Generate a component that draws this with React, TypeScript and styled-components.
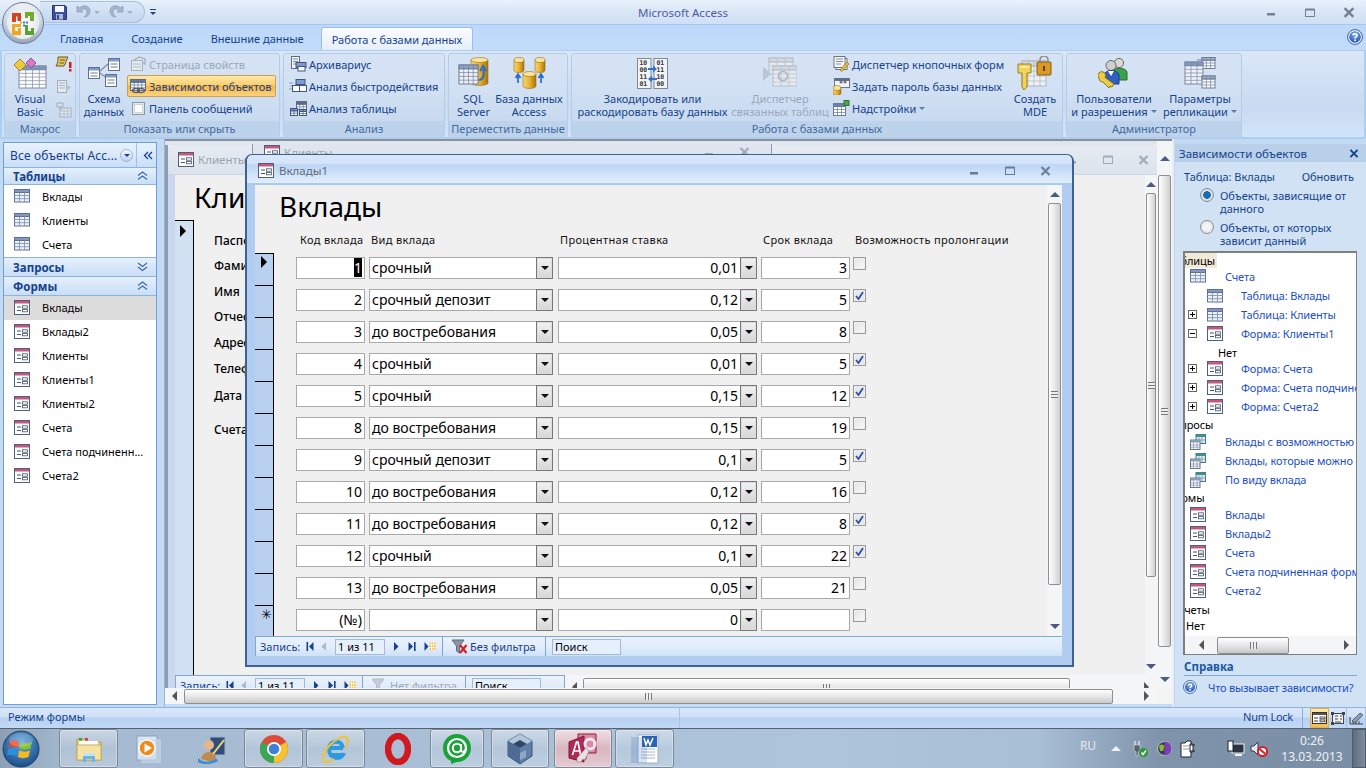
import React from "react";
import styled, { createGlobalStyle } from "styled-components";

const FONT = `"Noto Sans","DejaVu Sans",sans-serif`;

const Global = createGlobalStyle`
  html,body{margin:0;padding:0;overflow:hidden;background:#bfd6f3;}
  body{font-family:${FONT};font-size:11px;color:#15428b;}
  *{box-sizing:border-box;}
  svg{display:block;flex-shrink:0;}
`;

/* ---------- icon helpers ---------- */
type GP = { x: number; y: number; w: number; h: number; c: number; r: number; head?: string; line?: string; fill?: string };
const G = ({ x, y, w, h, c, r, head = "#8ea6cc", line = "#7d8ba8", fill = "#fff" }: GP) => {
  const cw = w / c, rh = h / r;
  return (
    <g>
      <rect x={x} y={y} width={w} height={h} fill={fill} stroke={line} strokeWidth="1" />
      <rect x={x} y={y} width={w} height={rh} fill={head} stroke={line} strokeWidth="1" />
      {Array.from({ length: c - 1 }, (_, i) => <path key={i} d={`M${x + cw * (i + 1)} ${y}V${y + h}`} stroke={line} strokeWidth=".7" />)}
      {Array.from({ length: r - 1 }, (_, i) => <path key={i} d={`M${x} ${y + rh * (i + 1)}H${x + w}`} stroke={line} strokeWidth=".7" />)}
    </g>
  );
};
const Cyl = ({ x, y, w, h }: { x: number; y: number; w: number; h: number }) => (
  <g>
    <defs>
      <linearGradient id="cy" x1="0" x2="1" y1="0" y2="0">
        <stop offset="0" stopColor="#f7d774" /><stop offset=".5" stopColor="#e8b22f" /><stop offset="1" stopColor="#a9740c" />
      </linearGradient>
    </defs>
    <path d={`M${x} ${y + 2}V${y + h - 2}a${w / 2} 2.5 0 0 0 ${w} 0V${y + 2}z`} fill="url(#cy)" stroke="#99701a" strokeWidth=".6" />
    <ellipse cx={x + w / 2} cy={y + 2} rx={w / 2} ry="2.5" fill="#f9e59a" stroke="#99701a" strokeWidth=".6" />
  </g>
);
const TableIcon = () => (
  <svg width="16" height="14" viewBox="0 0 16 14"><rect x=".5" y=".5" width="15" height="12.5" fill="#eef2f9" stroke="#5f6f90" /><rect x=".5" y=".5" width="15" height="3" fill="#8397bf" stroke="#5f6f90" /><path d="M5.5 3.5V13M10.5 3.5V13M.5 6.5H15.5M.5 9.7H15.5" stroke="#8b9cc0" /></svg>
);
const FormIcon = () => (
  <svg width="16" height="15" viewBox="0 0 16 15"><rect x=".5" y=".5" width="15" height="14" fill="#fff" stroke="#4f5f80" /><rect x="1" y="1" width="14" height="2.5" fill="#c8557a" /><path d="M3 7H7M3 10.5H7" stroke="#44546f" /><rect x="8.5" y="5.8" width="5" height="2.4" fill="#fff" stroke="#44546f" strokeWidth=".8" /><rect x="8.5" y="9.4" width="5" height="2.4" fill="#fff" stroke="#44546f" strokeWidth=".8" /></svg>
);
const QueryIcon = () => (
  <svg width="16" height="16" viewBox="0 0 16 16"><rect x="6" y=".5" width="9.5" height="9" fill="#dfeaea" stroke="#3c7d80" /><rect x="6" y=".5" width="9.5" height="2.5" fill="#3f8f92" /><rect x=".5" y="6" width="9.5" height="9.5" fill="#fff" stroke="#66748f" /><rect x=".5" y="6" width="9.5" height="2.5" fill="#8a9dbd" /><path d="M3.5 8.5V15.5M7 8.5V15.5M.5 11H10M.5 13.2H10M9 3.5V6M12 3V9.5M10 6H15.5" stroke="#7d8ca8" strokeWidth=".7" /></svg>
);
const Orb = () => (
  <svg width="44" height="44" viewBox="0 0 44 44">
    <defs>
      <radialGradient id="orbg" cx=".5" cy=".25" r=".85"><stop offset="0" stopColor="#fdfdfd" /><stop offset=".55" stopColor="#cfd9e6" /><stop offset="1" stopColor="#7f8ea3" /></radialGradient>
      <radialGradient id="orbi" cx=".5" cy=".5" r=".6"><stop offset="0" stopColor="#fff" /><stop offset="1" stopColor="#e1e7ee" /></radialGradient>
    </defs>
    <circle cx="22" cy="22" r="20.5" fill="url(#orbg)" stroke="#6f7f95" />
    <circle cx="22" cy="22" r="16" fill="url(#orbi)" />
    <path d="M11 12h9v8h-3.5v-4.5H15V21h-4z" fill="#d9431c" />
    <path d="M11 23h9v3h-6v4h3v-3h3v7h-9z" fill="#f2a51e" />
    <path d="M24 11h9v9h-4v-5h-2v2h-3z" fill="#74ad2a" />
    <path d="M24 24h3v6h3v-3h3v7h-9z" fill="#58a22e" />
    <rect x="22" y="20.5" width="2" height="2" fill="#3f78c4" /><rect x="19" y="20.5" width="2" height="2" fill="#c7a92a" /><rect x="25" y="20.5" width="2" height="2" fill="#3f78c4" /><rect x="22" y="23.5" width="2" height="2" fill="#3f78c4" />
  </svg>
);
const Save = () => (
  <svg width="15" height="15" viewBox="0 0 15 15"><path d="M.5.5H13L14.5 2V14.5H.5z" fill="#3b4f9c" stroke="#2b3570" /><rect x="3" y="1" width="9" height="6" fill="#f6f8fc" /><rect x="4" y="9" width="7" height="5.5" fill="#aab8d8" /><rect x="5" y="10" width="2" height="4" fill="#34457f" /></svg>
);
const Undo = ({ flip }: { flip?: boolean }) => (
  <svg width="15" height="14" viewBox="0 0 15 14"><g transform={flip ? "translate(15 0) scale(-1 1)" : ""}><path d="M1 1V7H7L5 5C8 3 11 4 11 7C11 9 10 11 8 12C12 12 14 9 14 6C14 1 8 -1 3.5 2.8z" fill="#a7b6ca" stroke="#8b9bb1" strokeWidth=".7" /></g></svg>
);
const Dn = styled.span<{ $c?: string }>`
  display:inline-block;width:0;height:0;flex-shrink:0;
  border-left:3px solid transparent;border-right:3px solid transparent;border-top:3px solid ${p => p.$c || "#a0b0c6"};
`;
const WMin = ({ c = "#707a88" }: { c?: string }) => <svg width="11" height="10" viewBox="0 0 11 10"><rect x="1" y="6" width="8" height="2.5" fill={c} /></svg>;
const WMax = ({ c = "#707a88", w = 9 }: { c?: string; w?: number }) => <svg width="10" height="9" viewBox="0 0 10 9"><rect x=".5" y="1.5" width={w} height="7" fill="none" stroke={c} /><rect x=".5" y=".5" width={w} height="2" fill={c} /></svg>;
const WClose = ({ c = "#707a88", s = 11 }: { c?: string; s?: number }) => <svg width={s} height={s - 1} viewBox="0 0 11 10"><path d="M1.5 1L9.5 9M9.5 1L1.5 9" stroke={c} strokeWidth="2.2" /></svg>;
const Help = ({ s = 16 }: { s?: number }) => (
  <svg width={s} height={s} viewBox="0 0 16 16"><defs><radialGradient id="hp" cx=".5" cy=".3" r=".8"><stop offset="0" stopColor="#7fb2f0" /><stop offset="1" stopColor="#1446a8" /></radialGradient></defs><circle cx="8" cy="8" r="7.4" fill="#f3f7fc" stroke="#2f5da8" /><circle cx="8" cy="8" r="5.8" fill="url(#hp)" /><path d="M6 6.3C6 4.4 10 4.3 10 6.4C10 7.9 8 7.8 8 9.5" fill="none" stroke="#fff" strokeWidth="1.6" /><rect x="7.2" y="10.5" width="1.7" height="1.7" fill="#fff" /></svg>
);
/* ribbon icons */
const VbIcon = () => (
  <svg width="34" height="32" viewBox="0 0 34 32"><G x={6} y={9} w={27} h={22} c={4} r={6} head="#7f97bf" /><path d="M1 8L7 2L13 8L7 14z" fill="#f0c93c" stroke="#a5842a" /><path d="M13 6L18 1L23 6L18 11z" fill="#d87ac8" stroke="#9a4c8f" /></svg>
);
const MacroIcon = () => (
  <svg width="18" height="16" viewBox="0 0 18 16"><path d="M3 1H13C11 4 11 7 9 10H1C3 7 3 4 3 1z" fill="#e4c660" stroke="#6b5a25" /><path d="M5 4H10M4.5 7H9" stroke="#6b5a25" /><rect x="14" y="6" width="2.5" height="6" fill="#d21f1f" /><rect x="14" y="13" width="2.5" height="2.5" fill="#d21f1f" /></svg>
);
const GrayDoc = () => (
  <svg width="16" height="16" viewBox="0 0 16 16"><rect x="1.5" y="1.5" width="9" height="12" fill="#e4eaf2" stroke="#a1adbc" /><path d="M3 4H9M3 6.5H9M3 9H9" stroke="#a8b4c4" /><path d="M10 5L15 8.5L10 12z" fill="#b4bfce" /></svg>
);
const GrayDoc2 = () => (
  <svg width="16" height="16" viewBox="0 0 16 16"><rect x="4" y="6" width="11" height="9" fill="#e4eaf2" stroke="#a1adbc" /><path d="M4 9H15M4 12H15M8 6V15M11.5 6V15" stroke="#b4bfce" /><path d="M1 1H7V5H1zM3 5L6 8" fill="#d6dde8" stroke="#a1adbc" /></svg>
);
const SchemaIcon = () => (
  <svg width="32" height="30" viewBox="0 0 32 30"><path d="M12 13L20 6M12 15L20 21" stroke="#7f8ea8" strokeWidth="1.2" /><g fill="#fff" stroke="#5d6f94"><rect x=".5" y="9.5" width="11" height="11" /><rect x="20.5" y=".5" width="11" height="12" /><rect x="17.5" y="16.5" width="11" height="12" /></g><g fill="#7f9ac7"><rect x="1" y="10" width="10" height="2.5" /><rect x="21" y="1" width="10" height="2.5" /><rect x="18" y="17" width="10" height="2.5" /></g><path d="M2.5 15H9.5M2.5 18H9.5M22.5 6H29.5M22.5 9H29.5M19.5 22H26.5M19.5 25H26.5" stroke="#6b7a96" /></svg>
);
const PropIcon = () => (
  <svg width="16" height="16" viewBox="0 0 16 16"><rect x="1.5" y="4.5" width="11" height="10" fill="#e4e9f0" stroke="#a6afbc" /><path d="M3 8H11M3 11H11" stroke="#b4bcc8" /><path d="M4 4L9 1L15 3V8L13 6.5" fill="none" stroke="#a6afbc" strokeWidth="1.3" /></svg>
);
const DepIcon = () => (
  <svg width="17" height="16" viewBox="0 0 17 16"><G x={.5} y={1.5} w={15} h={11} c={4} r={4} head="#5f7eab" line="#5c6c8c" /><ellipse cx="6" cy="12.5" rx="3.5" ry="2.2" fill="none" stroke="#4d5a70" strokeWidth="1.2" /><ellipse cx="11" cy="12.5" rx="3.5" ry="2.2" fill="none" stroke="#4d5a70" strokeWidth="1.2" /></svg>
);
const CheckBoxIcon = () => (
  <svg width="13" height="13" viewBox="0 0 13 13"><rect x=".5" y=".5" width="12" height="12" fill="#e6eaf0" stroke="#8d98a6" /><rect x="2.5" y="2.5" width="8" height="8" fill="#fff" stroke="#cdd3db" /></svg>
);
const ArchIcon = () => (
  <svg width="17" height="16" viewBox="0 0 17 16"><rect x="1.5" y=".5" width="8" height="12" fill="#f3f6fb" stroke="#5f6f8a" /><path d="M3 3H8M3 5.5H8M3 8H7" stroke="#7c8aa3" /><rect x="6" y="6.5" width="10" height="5" fill="#7e9ccb" stroke="#3f5788" /><rect x="8" y="10.5" width="7" height="4.5" fill="#fff" stroke="#3f5788" /></svg>
);
const PerfIcon = () => (
  <svg width="18" height="16" viewBox="0 0 18 16"><path d="M0 5H4M1 8H4M0 11H4" stroke="#7fa3d1" /><rect x="7" y="1.5" width="9" height="5" fill="#7e9ccb" stroke="#3f5788" /><rect x="3.5" y="7.5" width="7" height="6" fill="#fff" stroke="#3f5788" /><rect x="10.5" y="7.5" width="7" height="6" fill="#fff" stroke="#3f5788" /><path d="M12 6.5V7.5M7 6.5V7.5" stroke="#3f5788" /></svg>
);
const TabAnIcon = () => (
  <svg width="17" height="16" viewBox="0 0 17 16"><G x={6.5} y={1.5} w={10} h={8} c={3} r={3} head="#5e6d86" line="#5e6d86" /><G x={.5} y={8.5} w={7} h={7} c={2} r={3} head="#7e9ccb" line="#3f5788" /><G x={9.5} y={9.5} w={7} h={6} c={2} r={3} head="#7e9ccb" line="#3f5788" /></svg>
);
const SqlIcon = () => (
  <svg width="32" height="32" viewBox="0 0 32 32"><Cyl x={13} y={1} w={17} h={27} /><G x={1} y={8} w={19} h={19} c={4} r={5} head="#8ea3c6" line="#6f7f9c" fill="#eef2f8" /><path d="M21 23C27 22 26 15 25 12M22 14L25 9L28 14" fill="none" stroke="#2c6cc8" strokeWidth="2" /></svg>
);
const DbIcon = () => (
  <svg width="33" height="32" viewBox="0 0 33 32"><Cyl x={1} y={1} w={10} h={14} /><Cyl x={22} y={1} w={10} h={14} /><Cyl x={10} y={15} w={13} h={16} /><path d="M5 18V26M2.5 21L5 17L7.5 21M28 26V18M25.5 21L28 17L30.5 21" fill="none" stroke="#2c6cc8" strokeWidth="1.7" /></svg>
);
const EncIcon = () => (
  <svg width="31" height="31" viewBox="0 0 31 31" fontFamily="DejaVu Sans Mono, monospace" fontSize="6.4" fontWeight="700" fill="#333">
    <rect x=".5" y=".5" width="13.5" height="30" fill="#f2f4f7" stroke="#7f8895" /><rect x="17" y=".5" width="13.5" height="30" fill="#f2f4f7" stroke="#7f8895" />
    <text x="2.5" y="7">10</text><text x="2.5" y="14">00</text><text x="2.5" y="21">11</text><text x="2.5" y="28">01</text>
    <text x="19.5" y="7">01</text><text x="19.5" y="14">11</text><text x="19.5" y="21">10</text><text x="19.5" y="28">00</text>
    <path d="M11 10H16V7.5L20 11L16 14.5V12H11zM20 20H15V17.5L11 21L15 24.5V22H20z" fill="#2d6fc9" />
  </svg>
);
const LinkIcon = () => (
  <svg width="34" height="32" viewBox="0 0 34 32"><G x={6} y={1} w={24} h={16} c={3} r={4} head="#d3d9e2" line="#b8bfca" fill="#e6eaf0" /><G x={10} y={9} w={24} h={20} c={3} r={5} head="#d3d9e2" line="#b8bfca" fill="#e6eaf0" /><path d="M0 10L8 17L0 24z" fill="#b9c6d6" /><circle cx="20" cy="19" r="4.5" fill="none" stroke="#aab4c2" strokeWidth="1.6" /></svg>
);
const SwitchIcon = () => (
  <svg width="17" height="16" viewBox="0 0 17 16"><rect x="3" y="2.5" width="11" height="11" fill="#fff" stroke="#6a7484" /><rect x="1" y=".5" width="11" height="11" fill="#f6f7f9" stroke="#6a7484" /><path d="M3 3H10M3 5.5H10M3 8H8" stroke="#808a9a" /><path d="M7 14L14 6L16 8L9 15.5z" fill="#e7b93b" stroke="#84681f" strokeWidth=".6" /></svg>
);
const PassIcon = () => (
  <svg width="17" height="17" viewBox="0 0 17 17"><rect x="1.5" y=".5" width="15" height="9" fill="#f2f4f7" stroke="#6d7788" /><rect x="1.5" y=".5" width="15" height="2.4" fill="#5d6e8c" /><text x="6" y="9" fontSize="8" fill="#333" fontFamily="DejaVu Sans">**</text><Cyl x={0} y={8} w={8} h={9} /></svg>
);
const AddIcon = () => (
  <svg width="17" height="16" viewBox="0 0 17 16"><G x={.5} y={3.5} w={12} h={12} c={3} r={4} head="#6b83ae" line="#6b7b98" /><rect x="11" y=".5" width="5" height="5" fill="#4aa64c" stroke="#2d7a30" /></svg>
);
const MdeIcon = () => (
  <svg width="36" height="34" viewBox="0 0 36 34"><G x={5} y={5} w={24} h={25} c={4} r={5} head="#d6dce6" line="#aeb6c4" fill="#edf0f5" /><rect x="20" y="6" width="14" height="13" rx="1" fill="#d99b22" stroke="#845b0f" /><path d="M23 6V4A4 4 0 0 1 31 4V6" fill="none" stroke="#8c8f94" strokeWidth="1.6" /><rect x="26" y="10" width="2" height="5" fill="#5f420c" /><path d="M1 8H14V17H10V31L7 34L5 31V17H1z" fill="#f1d35a" stroke="#9a7e1f" /><rect x="3" y="10" width="9" height="2" fill="#fbeaa4" /></svg>
);
const UsersIcon = () => (
  <svg width="32" height="32" viewBox="0 0 32 32"><circle cx="21" cy="6" r="4.6" fill="#d8d8d8" stroke="#6a6a6a" /><path d="M14 15C14 10 28 10 29 15V23H15z" fill="#3e9f4a" stroke="#2a6b33" /><circle cx="13" cy="8.5" r="5" fill="#cfcfcf" stroke="#6a6a6a" /><path d="M6 18C7 12 20 12 21 18V27H7z" fill="#2f60c2" stroke="#213f82" /><path d="M10 14L13 19L16 14" fill="#fff" /><path d="M1 21A3.8 3.8 0 1 1 7 20.5L16 27L14 30L12 29L11 31L9 29L5 25C3 25 1 24 1 21z" fill="#eccb48" stroke="#8d7419" /></svg>
);
const ReplIcon = () => (
  <svg width="32" height="32" viewBox="0 0 32 32"><path d="M18 3H13M18 24H13" stroke="#6f7f9c" /><G x={18} y={.5} w={13} h={11} c={3} r={4} head="#9fb0ca" line="#6f7f9c" /><G x={1} y={5} w={18} h={22} c={3} r={6} head="#7f96bf" line="#7a88a4" fill="#eef2f8" /><G x={18} y={19} w={13} h={12} c={3} r={4} head="#9fb0ca" line="#6f7f9c" /></svg>
);
const ArrowR = ({ c = "#15428b" }: { c?: string }) => <svg width="6" height="9" viewBox="0 0 6 9"><path d="M1 0L5.5 4.5L1 9z" fill={c} /></svg>;
const ArrowL = ({ c = "#15428b" }: { c?: string }) => <svg width="6" height="9" viewBox="0 0 6 9"><path d="M5 0L.5 4.5L5 9z" fill={c} /></svg>;
const First = () => <svg width="8" height="9" viewBox="0 0 8 9"><rect x=".5" width="1.6" height="9" fill="#15428b" /><path d="M7.5 0L3 4.5L7.5 9z" fill="#15428b" /></svg>;
const Last = () => <svg width="8" height="9" viewBox="0 0 8 9"><rect x="6" width="1.6" height="9" fill="#15428b" /><path d="M.5 0L5 4.5L.5 9z" fill="#15428b" /></svg>;
const NewRec = () => <svg width="12" height="9" viewBox="0 0 12 9"><path d="M.5 0L4.5 4.5L.5 9z" fill="#15428b" /><rect x="5.5" y=".5" width="6" height="7.5" fill="#f4c54a" /><path d="M5.5 2.5H11.5M5.5 5.5H11.5M7.5.5V8M9.5.5V8" stroke="#fff" strokeWidth=".7" /></svg>;
const Funnel = ({ on }: { on?: boolean }) => (
  <svg width="18" height="15" viewBox="0 0 18 15"><path d="M1 1H13L8.5 7V14L5.5 12V7z" fill={on ? "#8a95a8" : "#c4ccd8"} stroke={on ? "#5f6a7c" : "#b3bcc9"} />{on && <path d="M9 6L15.5 14M15.5 6L9 14" stroke="#d9231f" strokeWidth="2.2" />}</svg>
);

/* taskbar */
const TFolder = () => <svg width="30" height="30" viewBox="0 0 30 30"><path d="M3 5H11L13 8H27V26H3z" fill="#e7cd7a" stroke="#b69c4f" /><rect x="5" y="7" width="19" height="5" fill="#fff" /><rect x="5" y="4" width="3" height="2.5" fill="#2fa637" /><rect x="11" y="4" width="3" height="2.5" fill="#d93f3a" /><path d="M3 11H27V26H3z" fill="#f5e3a4" stroke="#c8ae62" /><path d="M9 22H21V28H18V25H12V28H9z" fill="#6ab4e8" /><rect x="10" y="19" width="10" height="3" fill="#bfe2f7" /></svg>;
const TWmp = () => <svg width="28" height="30" viewBox="0 0 28 30"><rect x="2" y="2" width="20" height="24" fill="#dce6f2" stroke="#8aa2bd" /><rect x="6" y="5" width="20" height="24" fill="#c9d8ea" opacity=".6" /><circle cx="12" cy="14" r="8" fill="#f08a1d" stroke="#fff" strokeWidth="1.5" /><path d="M9.5 9.5L17 14L9.5 18.5z" fill="#fff" /></svg>;
const TPen = () => <svg width="32" height="30" viewBox="0 0 32 30"><rect x="14" y="3" width="15" height="18" fill="#2f4f7a" stroke="#9fb2c8" /><circle cx="13" cy="11" r="5" fill="#e4b68a" /><path d="M5 25C6 17 18 15 20 23L16 28z" fill="#c28a4a" /><path d="M2 24C8 30 16 28 20 24L22 27C15 31 7 31 2 28z" fill="#3a8bd8" /><path d="M17 20L28 6" stroke="#f0d57a" strokeWidth="2" /></svg>;
const TChrome = () => <svg width="30" height="30" viewBox="0 0 30 30"><circle cx="15" cy="15" r="14" fill="#dd4b39" /><path d="M15 15L27.1 8A14 14 0 0 1 15 29z" fill="#f4c430" /><path d="M15 15L15 29A14 14 0 0 1 2.9 8z" fill="#3aa757" /><circle cx="15" cy="15" r="7" fill="#fff" /><circle cx="15" cy="15" r="5.3" fill="#3f81d9" /></svg>;
const TIe = () => <svg width="30" height="30" viewBox="0 0 30 30"><path d="M8 21H22M8 14H22M22 14C21 5 8 6 8 15C8 26 21 26 23 19" fill="none" stroke="#2b9ae0" strokeWidth="4" /><path d="M25 3C22 1 14 6 8 12C2 19 0 27 4 28C7 29 11 26 13 25" fill="none" stroke="#f2c230" strokeWidth="2" /><path d="M25 3C29 5 26 11 24 14" fill="none" stroke="#f2c230" strokeWidth="2" /></svg>;
const TOpera = () => <svg width="26" height="32" viewBox="0 0 26 32"><ellipse cx="13" cy="16" rx="10" ry="13" fill="none" stroke="#d0181f" strokeWidth="6.5" /></svg>;
const TMail = () => <svg width="30" height="32" viewBox="0 0 30 32"><path d="M15 1C23 1 29 7 29 15C29 23 23 29 15 29L9 31V28C4 26 1 21 1 15C1 7 7 1 15 1z" fill="#1ba33a" /><circle cx="15" cy="15" r="9" fill="none" stroke="#fff" strokeWidth="2.2" /><circle cx="15" cy="15" r="4.2" fill="none" stroke="#fff" strokeWidth="2" /><path d="M19 11V17C19 20 23 19 24 16" fill="none" stroke="#fff" strokeWidth="2" /></svg>;
const TVbox = () => <svg width="28" height="32" viewBox="0 0 28 32"><path d="M14 1L26 8V23L14 31L2 23V8z" fill="#5f7fa8" stroke="#3a5478" /><path d="M14 1L26 8L14 15L2 8z" fill="#b5c6da" /><path d="M14 15V31L2 23V8z" fill="#4d6b94" /><path d="M7 11L14 15L21 11L14 7z" fill="#2f4668" /><path d="M14 20L20 17V24L14 27z" fill="#8fa8c6" /></svg>;
const TAccess = () => (
  <svg width="34" height="32" viewBox="0 0 34 32">
    <path d="M12 1H30V20H20V26H12z" fill="#d98aa6" stroke="#8c1f42" />
    <path d="M3 9L18 3V29L3 25z" fill="#b02a55" stroke="#7c1a3b" />
    <path d="M6.5 22L10.5 9H12L15 24M8 18H13.5" fill="none" stroke="#fff" strokeWidth="1.7" />
    <circle cx="24" cy="11" r="5" fill="none" stroke="#f6e7ec" strokeWidth="3" />
    <path d="M20.5 14.5L11 25V29H15L16.5 26.5H19L23 18z" fill="#eadfe3" stroke="#8a8088" strokeWidth=".6" />
  </svg>
);
const TWord = () => <svg width="30" height="32" viewBox="0 0 30 32"><rect x="8" y="2" width="20" height="28" fill="#fff" stroke="#9fb0c6" /><path d="M11 16H25M11 19H25M11 22H25M11 25H25" stroke="#a6b7cc" /><rect x="1" y="4" width="16" height="26" fill="#2a5db0" opacity=".18" /><rect x="12" y="3" width="15" height="11" fill="#2a62b8" /><path d="M14 5L16 12L18 7L20 12L23 5" fill="none" stroke="#fff" strokeWidth="1.5" /></svg>;
const WinOrb = () => (
  <svg width="38" height="38" viewBox="0 0 38 38"><defs><radialGradient id="wo" cx=".5" cy=".35" r=".75"><stop offset="0" stopColor="#5ca6e0" /><stop offset="1" stopColor="#123f7a" /></radialGradient></defs><circle cx="19" cy="19" r="18" fill="url(#wo)" stroke="#24425f" /><path d="M8 11C11 10 14 10 17.5 12L16 18C13 16.5 10 16.5 6.5 17.5z" fill="#e54b2b" /><path d="M19 12.5C22 14 26 14 30 12L28.5 18.5C25 20 21.5 20 17.5 18.5z" fill="#83c127" /><path d="M6 19C9.5 18 13 18 16 19.8L14.5 26C11.5 24.5 8 24.5 5 25.5z" fill="#2a8fdc" /><path d="M17.2 20.5C21 22 24.5 22 28 20.5L26.5 27C23 28.5 19.5 28.5 15.8 27z" fill="#f6b81c" /><ellipse cx="19" cy="10" rx="12" ry="7" fill="#fff" opacity=".2" /></svg>
);
const TrayPlug = () => <svg width="18" height="18" viewBox="0 0 18 18"><path d="M3 5H9V10L7 12V16H5V12L3 10z" fill="#59636f" stroke="#d8dde3" strokeWidth=".6" /><path d="M4 1V5M8 1V5" stroke="#d8dde3" strokeWidth="1.5" /><circle cx="12.5" cy="12.5" r="4.5" fill="#2c9c3b" /><path d="M10.5 12.5L12 14.5L15 10.5" fill="none" stroke="#fff" strokeWidth="1.5" /></svg>;
const TrayGlobe = () => <svg width="15" height="15" viewBox="0 0 15 15"><circle cx="7.5" cy="7.5" r="7" fill="#3c3c5c" stroke="#c8ccd2" /><path d="M7.5.5A7 7 0 0 1 7.5 14.5z" fill="#7b3fb8" /><path d="M2 5C4 3 6 3 7.5 5L6 10H3z" fill="#8cbb2a" /></svg>;
const TrayPower = () => <svg width="16" height="18" viewBox="0 0 16 18"><path d="M1 3H5L7 1H11V17H1z" fill="#fff" stroke="#1c2430" /><path d="M3 6H9M3 9H9" stroke="#999" /><path d="M10 5H15M10 11H15M10 4H13V12H10z" fill="#fff" stroke="#1c2430" /></svg>;
const TrayNet = () => <svg width="18" height="17" viewBox="0 0 18 17"><rect x="5" y="4" width="12" height="9" fill="#2b3440" stroke="#eef1f4" /><rect x="1" y="1" width="5" height="10" fill="#fff" stroke="#1c2430" /><path d="M8 15H15" stroke="#eef1f4" strokeWidth="2" /></svg>;
const TraySound = () => <svg width="18" height="16" viewBox="0 0 18 16"><path d="M1 5H4L8 1V14L4 10H1z" fill="#e8ecf0" stroke="#333c48" /><circle cx="12.5" cy="10.5" r="4.6" fill="#fff" stroke="#d0222a" strokeWidth="2" /><path d="M9.5 8L15.5 13" stroke="#d0222a" strokeWidth="2" /></svg>;
const ViewForm = () => <svg width="15" height="12" viewBox="0 0 15 12"><rect x=".5" y=".5" width="14" height="11" fill="#fff" stroke="#333" /><rect x="1" y="1" width="13" height="2" fill="#555" /><path d="M2 6H6M2 9H6" stroke="#333" /><rect x="8" y="5" width="5" height="1.8" fill="none" stroke="#333" strokeWidth=".8" /><rect x="8" y="8" width="5" height="1.8" fill="none" stroke="#333" strokeWidth=".8" /></svg>;
const ViewLayout = () => <svg width="14" height="13" viewBox="0 0 14 13"><rect x="1.5" y="1.5" width="11" height="10" fill="#eef2f8" stroke="#444" /><path d="M4 4H7M4 7H7M9 4H11M9 7H11M4 10H10" stroke="#444" /><path d="M0 0H3V3H0zM11 0H14V3H11zM0 10H3V13H0z" fill="#444" /></svg>;
const ViewDesign = () => <svg width="15" height="13" viewBox="0 0 15 13"><path d="M1 12H14M1 12V5M4 12V9M7 12V9M10 12V9" stroke="#444" /><path d="M3 9L11 1L14 3L6 11z" fill="#8b9bb1" stroke="#444" strokeWidth=".7" /></svg>;

/* ---------- layout ---------- */
const Page = styled.div`width:1366px;height:768px;display:flex;flex-direction:column;overflow:hidden;position:relative;`;
const OrbBox = styled.div`position:absolute;left:1px;top:1px;z-index:5;`;

const TitleBar = styled.div`
  height:25px;flex-shrink:0;display:grid;grid-template-columns:1fr auto 1fr;align-items:center;
  background:linear-gradient(#e9f1fb,#dbe7f7 45%,#cfdff4);border-bottom:1px solid #a5c8f0;
`;
const Qat = styled.div`display:flex;align-items:center;`;
const QatPill = styled.div`
  margin-left:40px;width:105px;height:22px;display:flex;align-items:center;padding-left:12px;
  background:linear-gradient(#dbe7f6,#c3d7f0);border:1px solid #a9c2e1;border-left:none;border-radius:0 12px 12px 0;
`;
const QatGap = styled.span<{ $w: number }>`width:${p => p.$w}px;flex-shrink:0;`;
const QatMenu = styled.div`
  margin-left:5px;width:6px;border-top:1px solid #28436f;padding-top:2px;display:flex;justify-content:center;
`;
const AppTitle = styled.div`color:#4f5aa6;font-size:11.5px;`;
const WinBtns = styled.div`display:flex;justify-content:flex-end;align-items:center;gap:28px;padding-right:11px;`;

const TabRow = styled.div`
  height:25px;flex-shrink:0;display:flex;align-items:flex-end;gap:28px;padding-left:60px;position:relative;
  background:linear-gradient(#bcd8fb,#c2dbf9);
`;
const Tab = styled.div`height:23px;line-height:24px;color:#15428b;font-size:11px;`;
const ActiveTab = styled(Tab)`
  margin-left:-11px;padding:0 10px;background:linear-gradient(#fbfdff,#e4eefb);border:1px solid #9dbde6;border-bottom:none;border-radius:3px 3px 0 0;
`;
const HelpBox = styled.div`position:absolute;right:3px;top:4px;`;

const Ribbon = styled.div`
  height:89px;flex-shrink:0;display:flex;gap:3px;padding:2px 0 0 2px;
  background:linear-gradient(#dbe7f7,#c8dbf2 65%,#d2e4f8);border:1px solid #a9cff2;border-width:1px 2px 2px 2px;border-radius:3px;
`;
const Group = styled.div<{ $w: number }>`
  width:${p => p.$w}px;height:85px;display:flex;flex-direction:column;overflow:hidden;
  background:linear-gradient(#d6e3f4,#d2e1f3 40%,#c4d7ee);border:1px solid #b5cce8;border-radius:3px;
`;
const GroupBody = styled.div<{ $pl: number }>`flex:1;display:flex;padding-left:${p => p.$pl}px;min-height:0;`;
const GroupLabel = styled.div`height:16px;line-height:15px;text-align:center;background:#bdd3ec;color:#44699c;font-size:11px;flex-shrink:0;`;
const BigBtn = styled.div<{ $w: number; $off?: boolean }>`
  width:${p => p.$w}px;flex-shrink:0;display:flex;flex-direction:column;align-items:center;color:${p => p.$off ? "#9aa8ba" : "#15428b"};
`;
const BigIcon = styled.div`height:38px;display:flex;align-items:center;justify-content:center;`;
const BigText = styled.div`line-height:13px;text-align:center;white-space:nowrap;display:flex;flex-direction:column;align-items:center;`;
const Cap = styled.span`display:inline-flex;align-items:center;gap:3px;`;
const Stack = styled.div<{ $w: number; $ml?: number }>`width:${p => p.$w}px;margin:-1px 0 0 ${p => p.$ml || 0}px;flex-shrink:0;display:flex;flex-direction:column;`;
const SmallBtn = styled.div<{ $on?: boolean; $off?: boolean }>`
  height:22px;display:flex;align-items:center;gap:3px;padding-left:3px;white-space:nowrap;color:${p => p.$off ? "#9aa8ba" : "#15428b"};
  ${p => p.$on ? "background:linear-gradient(#fde9a8,#fbcf6a 45%,#f8b545 50%,#fbd37a);border:1px solid #c9a055;border-radius:2px;padding-left:2px;color:#15428b;" : ""}
`;
const IconCell = styled.span`width:16px;height:16px;display:flex;align-items:center;justify-content:center;flex-shrink:0;`;
const IconOnly = styled.div`height:24px;width:20px;display:flex;align-items:center;justify-content:center;`;

const Main = styled.div`flex:1;min-height:0;display:flex;background:#c4dbf6;`;

/* nav pane */
const NavPane = styled.div`width:165px;flex-shrink:0;padding:3px 7px 2px 3px;display:flex;background:#c4daf3;border-right:1px solid #9bb4d2;`;
const NavPanel = styled.div`flex:1;background:#fff;border:1px solid #6f9fd8;display:flex;flex-direction:column;overflow:hidden;`;
const NavHead = styled.div`
  height:25px;flex-shrink:0;display:flex;align-items:center;padding-left:6px;color:#15428b;font-size:12px;letter-spacing:.15px;
  background:linear-gradient(#e9f2fd,#c9def7);border-bottom:1px solid #8fb3df;
`;
const NavHeadText = styled.span`width:108px;white-space:nowrap;`;
const NavDrop = styled.span`
  width:13px;height:13px;margin-left:2px;border-radius:50%;display:flex;align-items:center;justify-content:center;
  background:linear-gradient(#f4f8fd,#bcd0e9);border:1px solid #9db6d6;
`;
const NavSplit = styled.span`width:1px;height:24px;margin-left:3px;background:#f4f8fd;border-right:1px solid #a4bfe0;`;
const NavCollapse = styled.span`margin-left:6px;`;
const NavSec = styled.div<{ $h: number; $line?: boolean }>`
  height:${p => p.$h}px;flex-shrink:0;display:flex;align-items:center;justify-content:space-between;padding:0 8px 0 9px;font-weight:700;color:#15428b;font-size:11.5px;
  background:linear-gradient(#e5f0fc,#c9def7);border-bottom:1px solid #8fb3df;${p => p.$line ? "border-top:1px solid #8fb3df;" : ""}
`;
const NavItem = styled.div<{ $sel?: boolean }>`
  height:24px;flex-shrink:0;display:flex;align-items:center;gap:12px;padding:0 0 2px 10px;color:#000;background:${p => p.$sel ? "#dcdcdc" : "#fff"};
`;
const Chev = ({ down }: { down?: boolean }) => (
  <svg width="11" height="10" viewBox="0 0 11 10"><path d={down ? "M1 1L5.5 4.5L10 1M1 5L5.5 8.5L10 5" : "M1 4.5L5.5 1L10 4.5M1 8.5L5.5 5L10 8.5"} fill="none" stroke="#3f6aa3" strokeWidth="1.2" /></svg>
);

/* mdi */
const Mdi = styled.div`
  flex:1;min-width:0;display:grid;grid-template-columns:1fr 15px;grid-template-rows:1fr 16px;margin-bottom:3px;
  border-top:2px solid #8a8f99;
`;
const Canvas = styled.div`position:relative;overflow:hidden;background:#dfe5ee;`;
const Corner = styled.div`background:#f3f3f3;`;

const VBar = styled.div<{ $w: number }>`width:${p => p.$w}px;flex-shrink:0;display:flex;flex-direction:column;align-items:center;background:#f4f5f6;`;
const ArrowBox = styled.div<{ $h: number }>`height:${p => p.$h}px;flex-shrink:0;display:flex;align-items:center;justify-content:center;`;
const ThumbV = styled.div<{ $h: number }>`
  height:${p => p.$h}px;width:calc(100% - 2px);flex-shrink:0;display:flex;align-items:center;justify-content:center;
  background:linear-gradient(90deg,#fff,#e9e9e9 50%,#cfcfcf);border:1px solid #8f8f8f;border-radius:2px;
`;
const GripV = styled.div`width:7px;height:7px;background:repeating-linear-gradient(#777 0 1px,#eee 1px 3px);`;
const Grow = styled.div`flex:1;`;
const UpTri = styled.span`width:0;height:0;border-left:5px solid transparent;border-right:5px solid transparent;border-bottom:5px solid #4a5a80;`;
const DnTri = styled.span`width:0;height:0;border-left:5px solid transparent;border-right:5px solid transparent;border-top:5px solid #4a5a80;`;
const HBar = styled.div<{ $h: number }>`height:${p => p.$h}px;display:flex;align-items:center;background:#f4f5f6;min-width:0;`;
const ArrowBoxH = styled.div<{ $w: number }>`width:${p => p.$w}px;flex-shrink:0;display:flex;align-items:center;justify-content:center;`;
const ThumbH = styled.div<{ $w: number }>`
  width:${p => p.$w}px;height:calc(100% - 1px);flex-shrink:0;display:flex;align-items:center;justify-content:center;
  background:linear-gradient(#fff,#e6e6e6 50%,#c9c9c9);border:1px solid #8f8f8f;border-radius:2px;
`;
const GripH = styled.div`width:7px;height:7px;background:repeating-linear-gradient(90deg,#777 0 1px,#eee 1px 3px);`;
const LTri = styled.span`width:0;height:0;border-top:5px solid transparent;border-bottom:5px solid transparent;border-right:5px solid #555;`;
const RTri = styled.span`width:0;height:0;border-top:5px solid transparent;border-bottom:5px solid transparent;border-left:5px solid #555;`;

const ScrollV = ({ w, top, h, bottom = 17 }: { w: number; top: number; h: number; bottom?: number }) => (
  <VBar $w={w}>
    <ArrowBox $h={top}><UpTri /></ArrowBox>
    <ThumbV $h={h}><GripV /></ThumbV>
    <Grow />
    <ArrowBox $h={bottom}><DnTri /></ArrowBox>
  </VBar>
);
const ScrollH = ({ h, left, w, right = 22 }: { h: number; left: number; w: number; right?: number }) => (
  <HBar $h={h}>
    <ArrowBoxH $w={left}><LTri /></ArrowBoxH>
    <ThumbH $w={w}><GripH /></ThumbH>
    <Grow />
    <ArrowBoxH $w={right}><RTri /></ArrowBoxH>
  </HBar>
);

/* back windows */
const WinA = styled.div`
  position:absolute;left:0;top:4px;width:992px;height:560px;display:flex;flex-direction:column;background:#f0f0f0;
  border-left:3px solid #8d9cb2;
`;
const FadedTitle = styled.div`
  height:30px;flex-shrink:0;display:flex;align-items:center;gap:4px;padding-left:10px;color:#9ba3ad;font-size:11.5px;
  background:linear-gradient(#e6ebf2,#dce3ec);border-bottom:1px solid #ccd6e4;border-radius:4px 4px 0 0;
`;
const FadedBtns = styled.div`margin-left:auto;display:flex;gap:25px;padding-right:8px;align-items:center;opacity:.55;`;
const ABody = styled.div`flex:1;display:flex;flex-direction:column;padding-left:7px;background:#c9d8ec;min-height:0;`;
const ATop = styled.div`height:500px;display:flex;background:#f0f0f0;flex-shrink:0;`;
const AForm = styled.div`flex:1;min-width:0;display:flex;flex-direction:column;overflow:hidden;`;
const AHeading = styled.div`height:45px;flex-shrink:0;padding-left:19px;font-size:28px;line-height:44px;color:#000;`;
const ARow = styled.div`flex:1;display:flex;min-height:0;`;
const SelCol = styled.div`width:19px;flex-shrink:0;background:#d2e1f2;border-right:1px solid #000;border-top:1px solid #000;padding:4px 0 0 5px;`;
const ALabels = styled.div`flex:1;padding:12px 0 0 20px;display:flex;flex-direction:column;`;
const ALabel = styled.div<{ $mt: number }>`height:18px;line-height:18px;margin-top:${p => p.$mt}px;color:#000;font-size:12px;font-weight:500;`;
const AFoot = styled.div`display:flex;flex:1;background:#f0f0f0;`;
const ANavWrap = styled.div`width:390px;flex-shrink:0;border-right:1px solid #7fa7d8;`;
const AHWrap = styled.div`flex:1;min-width:0;padding-top:2px;background:#f4f5f6;`;
const RecTri = styled.span`display:block;width:0;height:0;border-top:6px solid transparent;border-bottom:6px solid transparent;border-left:6px solid #000;`;

const WinB = styled.div`
  position:absolute;left:87px;top:3px;width:520px;height:60px;display:flex;align-items:flex-start;gap:4px;padding:1px 0 0 11px;color:#9ba3ad;font-size:11.5px;
  background:#dfe5ee;border:1px solid #8e9bad;border-width:0 1px;
`;
const BBtns = styled.div`margin-left:auto;display:flex;gap:24px;padding:2px 21px 0 0;opacity:.55;`;

/* front window */
const WinC = styled.div`
  position:absolute;left:80px;top:13px;width:829px;height:513px;display:flex;flex-direction:column;
  border:2px solid #3e628f;border-top-width:1px;border-radius:7px 7px 0 0;background:#b0ccf0;overflow:hidden;
`;
const CTitle = styled.div`
  height:30px;flex-shrink:0;display:flex;align-items:center;gap:5px;padding:3px 0 0 11px;color:#5d6a80;font-size:11.5px;
  background:linear-gradient(#d9e7fb,#d3e3f9 30%,#bdd6f4 35%,#d0e3f9 70%,#e1eefc);border-bottom:2px solid #a8cbf1;
`;
const CBtns = styled.div`margin-left:auto;display:flex;align-items:center;gap:25px;padding-right:21px;`;
const CBody = styled.div`flex:1;display:flex;flex-direction:column;padding:0 10px 9px 8px;min-height:0;`;
const CTop = styled.div`flex:1;display:flex;min-height:0;background:#f0f0f0;`;
const CForm = styled.div`flex:1;min-width:0;display:flex;flex-direction:column;overflow:hidden;`;
const CHeading = styled.div`height:43px;flex-shrink:0;padding-left:24px;font-size:28px;line-height:43px;color:#000;`;
const ColHead = styled.div`height:25px;flex-shrink:0;display:flex;align-items:center;padding:0 0 2px 45px;`;
const ColLabel = styled.div<{ $w: number }>`width:${p => p.$w}px;flex-shrink:0;color:#111;white-space:nowrap;letter-spacing:.35px;`;
const Rec = styled.div`height:32px;flex-shrink:0;display:flex;`;
const RecSel = styled.div`
  width:19px;flex-shrink:0;background:#b9d0ef;border-right:1px solid #000;border-top:1px solid #000;padding:2px 0 0 6px;color:#000;font-size:13px;line-height:13px;
`;
const Fields = styled.div`flex:1;display:flex;padding:4px 0 0 22px;`;
const Field = styled.div<{ $w: number; $ml?: number; $left?: boolean }>`
  width:${p => p.$w}px;height:22px;margin-left:${p => p.$ml || 0}px;flex-shrink:0;display:flex;align-items:center;
  justify-content:${p => p.$left ? "flex-start" : "flex-end"};padding:0 2px 2px;background:#fff;border:1px solid #a9a9a9;color:#000;font-size:14px;white-space:nowrap;
`;
const Sel = styled.span`background:#000;color:#fff;`;
const Combo = styled.div<{ $w: number; $ml: number; $left?: boolean }>`
  width:${p => p.$w}px;height:22px;margin-left:${p => p.$ml}px;flex-shrink:0;display:flex;background:#fff;border:1px solid #a9a9a9;color:#000;font-size:14px;
`;
const ComboText = styled.div<{ $left?: boolean }>`flex:1;padding:0 2px 2px;display:flex;align-items:center;justify-content:${p => p.$left ? "flex-start" : "flex-end"};white-space:nowrap;`;
const ComboBtn = styled.div`
  width:17px;margin:-1px -1px -1px 0;flex-shrink:0;display:flex;align-items:center;justify-content:center;
  background:linear-gradient(#f2f2f2,#d6d6d6);border:1px solid #777;outline:1px solid #ddd;outline-offset:-2px;
`;
const ComboTri = styled.span`width:0;height:0;border-left:4px solid transparent;border-right:4px solid transparent;border-top:4px solid #111;`;
const Check = styled.div<{ $on: boolean }>`
  width:13px;height:13px;margin:0 0 0 3px;flex-shrink:0;background:${p => p.$on ? "#e3e9f2" : "linear-gradient(135deg,#e2e2e2,#fbfbfb)"};border:1px solid #9a9a9a;box-shadow:inset 0 0 0 1px #eee;display:flex;align-items:center;justify-content:center;
`;

/* record nav */
const RNav = styled.div`
  height:20px;flex-shrink:0;display:flex;align-items:center;background:linear-gradient(#e9f2fd,#e2edfb 50%,#cfe1f8);border-top:1px solid #7ea7da;border-left:1px solid #7ea7da;color:#1f3f70;white-space:nowrap;
`;
const RLabel = styled.span`width:47px;padding-left:4px;flex-shrink:0;color:#15428b;`;
const RBtn = styled.span<{ $w: number }>`width:${p => p.$w}px;flex-shrink:0;display:flex;justify-content:center;`;
const RField = styled.span<{ $w: number; $ml: number }>`
  width:${p => p.$w}px;height:16px;margin-left:${p => p.$ml}px;flex-shrink:0;padding-left:2px;line-height:13px;color:#000;background:#e6f0fc;border:1px solid #a3bad6;
`;
const RDiv = styled.span`width:1px;height:19px;background:#7ea7da;flex-shrink:0;`;
const RFilter = styled.span<{ $off?: boolean }>`width:102px;flex-shrink:0;display:flex;align-items:center;gap:1px;padding-left:8px;color:${p => p.$off ? "#9aa8ba" : "#15428b"};`;
const RestNav = styled.span`flex:1;`;

const RecordNav = ({ off }: { off?: boolean }) => (
  <RNav>
    <RLabel>Запись:</RLabel>
    <RBtn $w={14}><First /></RBtn>
    <RBtn $w={14}><ArrowL c="#a9b9cf" /></RBtn>
    <RField $w={50} $ml={4}>1 из 11</RField>
    <RBtn $w={22}><ArrowR /></RBtn>
    <RBtn $w={10}><Last /></RBtn>
    <RBtn $w={25}><NewRec /></RBtn>
    <RDiv />
    <RFilter $off={off}><Funnel on={!off} />{off ? "Нет фильтра" : "Без фильтра"}</RFilter>
    <RDiv />
    <RField $w={69} $ml={6}>Поиск</RField>
    <RestNav />
  </RNav>
);

/* dep pane */
const DepPane = styled.div`width:194px;flex-shrink:0;padding-left:3px;background:linear-gradient(90deg,#e6eff9 2px,#c4d6ec 2px);display:flex;`;
const DepInner = styled.div`flex:1;min-width:0;margin-left:0;background:#d1e2f4;display:flex;flex-direction:column;border-top:5px solid #c4daf3;`;
const DepHead = styled.div`height:18px;flex-shrink:0;display:flex;align-items:center;justify-content:space-between;padding:0 7px 0 4px;background:#b9d0ea;color:#15428b;font-size:11.5px;`;
const DepTop = styled.div`margin-top:6px;height:16px;flex-shrink:0;display:flex;justify-content:space-between;align-items:center;padding:0 12px 0 9px;color:#15428b;`;
const RadioRow = styled.div<{ $mt: number }>`margin:${p => p.$mt}px 0 0 25px;display:flex;gap:6px;line-height:13px;color:#15428b;height:26px;flex-shrink:0;`;
const Radio = styled.span<{ $on?: boolean }>`
  width:14px;height:14px;border-radius:50%;flex-shrink:0;border:1px solid #8a8f96;margin-top:-1px;
  background:${p => p.$on ? "radial-gradient(circle,#0f6fb8 0 3px,#2c5a80 3.5px,#dfe7f0 4px,#bdc5cf 100%)" : "radial-gradient(circle,#f4f5f7 0 3px,#cfd3d8 100%)"};
`;
const Tree = styled.div`
  margin:4px 9px 0 8px;height:404px;flex-shrink:0;background:#fff;border:1px solid #7f7f7f;border-width:2px 1px 1px 2px;display:flex;flex-direction:column;overflow:hidden;letter-spacing:-.12px;
`;
const TreeList = styled.div`flex:1;min-height:0;overflow:hidden;`;
const TreeGroup = styled.div<{ $h: number; $cut: number; $bg?: boolean }>`
  height:${p => p.$h}px;display:flex;align-items:flex-end;color:#000;overflow:hidden;white-space:nowrap;
  & > span{margin-left:${p => p.$cut}px;padding-right:2px;${p => p.$bg ? "background:#f0ead6;" : ""}line-height:15px;}
`;
const TreeRow = styled.div<{ $h?: number; $pb?: number; $lvl: number }>`
  height:${p => p.$h || 19}px;padding-bottom:${p => p.$pb || 0}px;display:flex;align-items:center;white-space:nowrap;color:#1c4fc6;padding-left:${p => p.$lvl ? 3 : 5}px;
`;
const Expander = styled.span<{ $show?: boolean }>`
  width:9px;height:9px;flex-shrink:0;margin-right:10px;position:relative;${p => p.$show ? "border:1px solid #666;background:#fff;" : ""}
`;
const Minus = styled.span`position:absolute;left:1px;top:3px;width:5px;height:1px;background:#000;`;
const Plus = styled.span`position:absolute;left:3px;top:1px;width:1px;height:5px;background:#000;`;
const TreeText = styled.span<{ $ml: number }>`margin-left:${p => p.$ml}px;`;
const TreeNote = styled.div<{ $h: number; $pl: number; $lh: number }>`height:${p => p.$h}px;padding-left:${p => p.$pl}px;color:#000;line-height:${p => p.$lh}px;font-size:11px;`;
const HelpTitle = styled.div`margin:3px 9px 0 9px;height:18px;flex-shrink:0;font-weight:700;font-size:11.5px;color:#1c5aa8;border-bottom:1px solid #7ea7da;line-height:18px;`;
const HelpRow = styled.div`height:22px;flex-shrink:0;display:flex;align-items:center;gap:11px;padding-left:8px;color:#1c4fc6;white-space:nowrap;letter-spacing:-.2px;`;

/* status */
const Status = styled.div`
  height:21px;flex-shrink:0;display:flex;align-items:center;color:#15428b;
  background:linear-gradient(#d8e7fb,#cfe0f8 45%,#b7d1f2 50%,#c2d9f6);border-top:1px solid #8fb4e0;
`;
const StatusL = styled.div`width:680px;height:100%;flex-shrink:0;padding-left:8px;line-height:18px;border-right:1px solid #a8c5e8;`;
const StatusM = styled.div`flex:1;height:100%;text-align:right;padding-right:9px;line-height:18px;letter-spacing:-.25px;border-right:1px solid #8aaed9;`;
const Views = styled.div`width:63px;flex-shrink:0;display:flex;padding-left:7px;height:100%;`;
const ViewBtn = styled.div<{ $on?: boolean }>`
  width:19px;display:flex;align-items:center;justify-content:center;${p => p.$on ? "background:linear-gradient(#fde9a8,#fbcf6a 50%,#f8bc52);border:1px solid #d3b06c;" : "border-right:1px solid #a8c5e8;"}
`;

/* taskbar */
const Taskbar = styled.div`
  height:40px;flex-shrink:0;display:flex;align-items:center;color:#eef2f7;border-top:1px solid #56616e;
  background:linear-gradient(90deg,#8c9fb4 0,#a5bad0 5%,#aec4da 60%,#a9bfd5 76%,#7f93aa 85%,#7a8ea6 100%);
`;
const OrbCell = styled.div`width:59px;flex-shrink:0;display:flex;justify-content:center;padding-right:17px;`;
const TaskBtn = styled.div<{ $w: number; $ml?: number; $frame?: boolean; $active?: boolean }>`
  width:${p => p.$w}px;height:39px;margin-left:${p => p.$ml || 0}px;flex-shrink:0;display:flex;align-items:center;justify-content:center;border-radius:3px;
  ${p => p.$frame ? "border:1px solid #7b8898;box-shadow:inset 0 0 0 1px rgba(255,255,255,.35);background:linear-gradient(rgba(255,255,255,.4),rgba(255,255,255,.12) 50%,rgba(255,255,255,.22));" : ""}
  ${p => p.$active ? "background:linear-gradient(#f0dfe4,#d8b7c0 50%,#e4cbd2);" : ""}
`;
const Tray = styled.div`margin-left:auto;display:flex;align-items:center;height:100%;`;
const TrayItem = styled.div<{ $w: number }>`width:${p => p.$w}px;flex-shrink:0;display:flex;justify-content:center;align-items:center;`;
const Lang = styled.div`width:30px;margin-right:2px;padding-bottom:6px;text-align:center;font-size:12px;color:#e3e8ee;`;
const Up = styled.span`width:0;height:0;border-left:5px solid transparent;border-right:5px solid transparent;border-bottom:5px solid #eef2f7;`;
const Clock = styled.div`width:80px;margin-left:2px;text-align:center;line-height:16px;font-size:12px;color:#eef2f7;`;
const ShowDesk = styled.div`width:14px;height:100%;background:linear-gradient(90deg,#5f6f80,#7f8d9d);border:1px solid #4f5b68;`;

const rows: [string, string, string, string, boolean][] = [
  ["1", "срочный", "0,01", "3", false],
  ["2", "срочный депозит", "0,12", "5", true],
  ["3", "до востребования", "0,05", "8", false],
  ["4", "срочный", "0,01", "5", true],
  ["5", "срочный", "0,15", "12", true],
  ["8", "до востребования", "0,15", "19", false],
  ["9", "срочный депозит", "0,1", "5", true],
  ["10", "до востребования", "0,12", "16", false],
  ["11", "до востребования", "0,12", "8", true],
  ["12", "срочный", "0,1", "22", true],
  ["13", "до востребования", "0,05", "21", false],
  ["(№)", "", "0", "", false],
];

const Tick = () => <svg width="9" height="9" viewBox="0 0 9 9"><path d="M1 5L3.5 8L8 1" fill="none" stroke="#3a4f9c" strokeWidth="1.8" /></svg>;

const Cap2 = ({ a, b, caret }: { a: string; b: string; caret?: boolean }) => (
  <BigText><span>{a}</span><Cap>{b}{caret && <Dn $c="#5a7aa8" />}</Cap></BigText>
);

const aLabels: [string, number][] = [["Паспорт", 0], ["Фамилия", 7], ["Имя", 8], ["Отчество", 7], ["Адрес", 8], ["Телефон", 8], ["Дата рождения", 9], ["Счета", 16]];

const TNode = ({ icon, text, exp }: { icon: "t" | "f"; text: string; exp?: "+" | "-" | "" }) => (
  <TreeRow $lvl={1}>
    <Expander $show={!!exp}>{exp && <Minus />}{exp === "+" && <Plus />}</Expander>
    {icon === "t" ? <TableIcon /> : <FormIcon />}
    <TreeText $ml={18}>{text}</TreeText>
  </TreeRow>
);
const TLeaf = ({ icon, text, h, pb }: { icon: "t" | "f" | "q"; text: string; h?: number; pb?: number }) => (
  <TreeRow $lvl={0} $h={h} $pb={pb}>
    {icon === "t" ? <TableIcon /> : icon === "f" ? <FormIcon /> : <QueryIcon />}
    <TreeText $ml={19}>{text}</TreeText>
  </TreeRow>
);

export default function App() {
  return (
    <Page>
      <Global />
      <OrbBox><Orb /></OrbBox>
      <TitleBar>
        <Qat>
          <QatPill>
            <Save /><QatGap $w={9} /><Undo /><QatGap $w={3} /><Dn /><QatGap $w={9} /><Undo flip /><QatGap $w={3} /><Dn />
          </QatPill>
          <QatMenu><Dn $c="#28436f" /></QatMenu>
        </Qat>
        <AppTitle>Microsoft Access</AppTitle>
        <WinBtns><WMin c="#76808e" /><WMax c="#76808e" /><WClose c="#76808e" s={12} /></WinBtns>
      </TitleBar>
      <TabRow>
        <Tab>Главная</Tab><Tab>Создание</Tab><Tab>Внешние данные</Tab>
        <ActiveTab>Работа с базами данных</ActiveTab>
        <HelpBox><Help s={16} /></HelpBox>
      </TabRow>
      <Ribbon>
        <Group $w={72}>
          <GroupBody $pl={4}>
            <BigBtn $w={42}><BigIcon><VbIcon /></BigIcon><Cap2 a="Visual" b="Basic" /></BigBtn>
            <Stack $w={20} $ml={3}><IconOnly><MacroIcon /></IconOnly><IconOnly><GrayDoc /></IconOnly><IconOnly><GrayDoc2 /></IconOnly></Stack>
          </GroupBody>
          <GroupLabel>Макрос</GroupLabel>
        </Group>
        <Group $w={201}>
          <GroupBody $pl={1}>
            <BigBtn $w={46}><BigIcon><SchemaIcon /></BigIcon><Cap2 a="Схема" b="данных" /></BigBtn>
            <Stack $w={149}>
              <SmallBtn $off><IconCell><PropIcon /></IconCell>Страница свойств</SmallBtn>
              <SmallBtn $on><IconCell><DepIcon /></IconCell>Зависимости объектов</SmallBtn>
              <SmallBtn><IconCell><CheckBoxIcon /></IconCell>Панель сообщений</SmallBtn>
            </Stack>
          </GroupBody>
          <GroupLabel>Показать или скрыть</GroupLabel>
        </Group>
        <Group $w={162}>
          <GroupBody $pl={3}>
            <Stack $w={155}>
              <SmallBtn><IconCell><ArchIcon /></IconCell>Архивариус</SmallBtn>
              <SmallBtn><IconCell><PerfIcon /></IconCell>Анализ быстродействия</SmallBtn>
              <SmallBtn><IconCell><TabAnIcon /></IconCell>Анализ таблицы</SmallBtn>
            </Stack>
          </GroupBody>
          <GroupLabel>Анализ</GroupLabel>
        </Group>
        <Group $w={120}>
          <GroupBody $pl={4}>
            <BigBtn $w={41}><BigIcon><SqlIcon /></BigIcon><Cap2 a="SQL" b="Server" /></BigBtn>
            <BigBtn $w={70}><BigIcon><DbIcon /></BigIcon><Cap2 a="База данных" b="Access" /></BigBtn>
          </GroupBody>
          <GroupLabel>Переместить данные</GroupLabel>
        </Group>
        <Group $w={492}>
          <GroupBody $pl={3}>
            <BigBtn $w={155}><BigIcon><EncIcon /></BigIcon><Cap2 a="Закодировать или" b="раскодировать базу данных" /></BigBtn>
            <BigBtn $w={100} $off><BigIcon><LinkIcon /></BigIcon><Cap2 a="Диспетчер" b="связанных таблиц" /></BigBtn>
            <Stack $w={180}>
              <SmallBtn><IconCell><SwitchIcon /></IconCell>Диспетчер кнопочных форм</SmallBtn>
              <SmallBtn><IconCell><PassIcon /></IconCell>Задать пароль базы данных</SmallBtn>
              <SmallBtn><IconCell><AddIcon /></IconCell><Cap>Надстройки <Dn $c="#5a7aa8" /></Cap></SmallBtn>
            </Stack>
            <BigBtn $w={50}><BigIcon><MdeIcon /></BigIcon><Cap2 a="Создать" b="MDE" /></BigBtn>
          </GroupBody>
          <GroupLabel>Работа с базами данных</GroupLabel>
        </Group>
        <Group $w={176}>
          <GroupBody $pl={3}>
            <BigBtn $w={88}><BigIcon><UsersIcon /></BigIcon><Cap2 a="Пользователи" b="и разрешения" caret /></BigBtn>
            <BigBtn $w={84}><BigIcon><ReplIcon /></BigIcon><Cap2 a="Параметры" b="репликации" caret /></BigBtn>
          </GroupBody>
          <GroupLabel>Администратор</GroupLabel>
        </Group>
      </Ribbon>
      <Main>
        <NavPane>
          <NavPanel>
            <NavHead>
              <NavHeadText>Все объекты Асс...</NavHeadText>
              <NavDrop><Dn $c="#15428b" /></NavDrop>
              <NavSplit />
              <NavCollapse><svg width="10" height="9" viewBox="0 0 10 9"><path d="M5 1L1.5 4.5L5 8M9 1L5.5 4.5L9 8" fill="none" stroke="#15428b" strokeWidth="1.3" /></svg></NavCollapse>
            </NavHead>
            <NavSec $h={17}>Таблицы<Chev /></NavSec>
            <NavItem><TableIcon />Вклады</NavItem>
            <NavItem><TableIcon />Клиенты</NavItem>
            <NavItem><TableIcon />Счета</NavItem>
            <NavSec $h={20} $line>Запросы<Chev down /></NavSec>
            <NavSec $h={19}>Формы<Chev /></NavSec>
            <NavItem $sel><FormIcon />Вклады</NavItem>
            <NavItem><FormIcon />Вклады2</NavItem>
            <NavItem><FormIcon />Клиенты</NavItem>
            <NavItem><FormIcon />Клиенты1</NavItem>
            <NavItem><FormIcon />Клиенты2</NavItem>
            <NavItem><FormIcon />Счета</NavItem>
            <NavItem><FormIcon />Счета подчиненн...</NavItem>
            <NavItem><FormIcon />Счета2</NavItem>
          </NavPanel>
        </NavPane>
        <Mdi>
          <Canvas>
            <WinA>
              <FadedTitle><FormIcon />Клиенты<FadedBtns><WMin /><WMax /><WClose /></FadedBtns></FadedTitle>
              <ABody>
                <ATop>
                  <AForm>
                    <AHeading>Клиенты</AHeading>
                    <ARow>
                      <SelCol><RecTri /></SelCol>
                      <ALabels>{aLabels.map(([t, m]) => <ALabel key={t} $mt={m}>{t}</ALabel>)}</ALabels>
                    </ARow>
                  </AForm>
                  <ScrollV w={12} top={18} h={384} />
                </ATop>
                <AFoot>
                  <ANavWrap><RecordNav off /></ANavWrap>
                  <AHWrap><ScrollH h={20} left={18} w={487} right={21} /></AHWrap>
                </AFoot>
              </ABody>
            </WinA>
            <WinB><FormIcon />Клиенты<BBtns><WMin /><WClose /></BBtns></WinB>
            <WinC>
              <CTitle><FormIcon />Вклады1<CBtns><WMin c="#6a7a90" /><WMax c="#6a7a90" /><WClose c="#6f8096" /></CBtns></CTitle>
              <CBody>
                <CTop>
                  <CForm>
                    <CHeading>Вклады</CHeading>
                    <ColHead>
                      <ColLabel $w={71}>Код вклада</ColLabel>
                      <ColLabel $w={189}>Вид вклада</ColLabel>
                      <ColLabel $w={203}>Процентная ставка</ColLabel>
                      <ColLabel $w={92}>Срок вклада</ColLabel>
                      <ColLabel $w={160}>Возможность пролонгации</ColLabel>
                    </ColHead>
                    {rows.map((r, i) => (
                      <Rec key={i}>
                        <RecSel>{i === 0 ? <RecTri /> : i === rows.length - 1 ? "✳" : null}</RecSel>
                        <Fields>
                          <Field $w={69}>{i === 0 ? <Sel>{r[0]}</Sel> : r[0]}</Field>
                          <Combo $w={184} $ml={4}><ComboText $left>{r[1]}</ComboText><ComboBtn><ComboTri /></ComboBtn></Combo>
                          <Combo $w={199} $ml={5}><ComboText>{r[2]}</ComboText><ComboBtn><ComboTri /></ComboBtn></Combo>
                          <Field $w={89} $ml={4}>{r[3]}</Field>
                          <Check $on={r[4]}>{r[4] && <Tick />}</Check>
                        </Fields>
                      </Rec>
                    ))}
                  </CForm>
                  <ScrollV w={15} top={18} h={382} bottom={20} />
                </CTop>
                <RecordNav />
              </CBody>
            </WinC>
          </Canvas>
          <ScrollV w={15} top={34} h={472} bottom={18} />
          <ScrollH h={16} left={19} w={929} right={22} />
          <Corner />
        </Mdi>
        <DepPane>
          <DepInner>
            <DepHead>Зависимости объектов<WClose c="#15428b" s={10} /></DepHead>
            <DepTop><span>Таблица: Вклады</span><span>Обновить</span></DepTop>
            <RadioRow $mt={5}><Radio $on /><span>Объекты, зависящие от<br />данного</span></RadioRow>
            <RadioRow $mt={6}><Radio /><span>Объекты, от которых<br />зависит данный</span></RadioRow>
            <Tree>
              <TreeList>
                <TreeGroup $h={15} $cut={-16} $bg><span>Таблицы</span></TreeGroup>
                <TLeaf icon="t" text="Счета" h={18} pb={2} />
                <TNode icon="t" text="Таблица: Вклады" exp="" />
                <TNode icon="t" text="Таблица: Клиенты" exp="+" />
                <TNode icon="f" text="Форма: Клиенты1" exp="-" />
                <TreeNote $h={16} $pl={33} $lh={20}>Нет</TreeNote>
                <TNode icon="f" text="Форма: Счета" exp="+" />
                <TNode icon="f" text="Форма: Счета подчиненная форма" exp="+" />
                <TNode icon="f" text="Форма: Счета2" exp="+" />
                <TreeGroup $h={16} $cut={-17}><span>Запросы</span></TreeGroup>
                <TLeaf icon="q" text="Вклады с возможностью пролонгации" />
                <TLeaf icon="q" text="Вклады, которые можно открыть" />
                <TLeaf icon="q" text="По виду вклада" />
                <TreeGroup $h={16} $cut={-19}><span>Формы</span></TreeGroup>
                <TLeaf icon="f" text="Вклады" />
                <TLeaf icon="f" text="Вклады2" />
                <TLeaf icon="f" text="Счета" />
                <TLeaf icon="f" text="Счета подчиненная форма" />
                <TLeaf icon="f" text="Счета2" />
                <TreeGroup $h={17} $cut={-14}><span>Отчеты</span></TreeGroup>
                <TreeNote $h={17} $pl={1} $lh={17}>Нет</TreeNote>
              </TreeList>
              <ScrollH h={18} left={32} w={72} right={19} />
            </Tree>
            <HelpTitle>Справка</HelpTitle>
            <HelpRow><Help s={14} />Что вызывает зависимости?</HelpRow>
          </DepInner>
        </DepPane>
      </Main>
      <Status>
        <StatusL>Режим формы</StatusL>
        <StatusM>Num Lock</StatusM>
        <Views>
          <ViewBtn $on><ViewForm /></ViewBtn>
          <ViewBtn><ViewLayout /></ViewBtn>
          <ViewBtn><ViewDesign /></ViewBtn>
        </Views>
      </Status>
      <Taskbar>
        <OrbCell><WinOrb /></OrbCell>
        <TaskBtn $w={59} $frame><TFolder /></TaskBtn>
        <TaskBtn $w={61}><TWmp /></TaskBtn>
        <TaskBtn $w={65}><TPen /></TaskBtn>
        <TaskBtn $w={59} $frame><TChrome /></TaskBtn>
        <TaskBtn $w={59} $ml={3} $frame><TIe /></TaskBtn>
        <TaskBtn $w={65}><TOpera /></TaskBtn>
        <TaskBtn $w={54} $frame><TMail /></TaskBtn>
        <TaskBtn $w={58} $ml={7} $frame><TVbox /></TaskBtn>
        <TaskBtn $w={58} $ml={5} $frame $active><TAccess /></TaskBtn>
        <TaskBtn $w={59} $ml={3} $frame><TWord /></TaskBtn>
        <Tray>
          <Lang>RU</Lang>
          <TrayItem $w={22}><Up /></TrayItem>
          <TrayItem $w={26}><TrayPlug /></TrayItem>
          <TrayItem $w={22}><TrayGlobe /></TrayItem>
          <TrayItem $w={26}><TrayPower /></TrayItem>
          <TrayItem $w={23} /><TrayItem $w={24}><TrayNet /></TrayItem>
          <TrayItem $w={22}><TraySound /></TrayItem>
          <Clock>0:26<br />13.03.2013</Clock>
          <ShowDesk />
        </Tray>
      </Taskbar>
    </Page>
  );
}
